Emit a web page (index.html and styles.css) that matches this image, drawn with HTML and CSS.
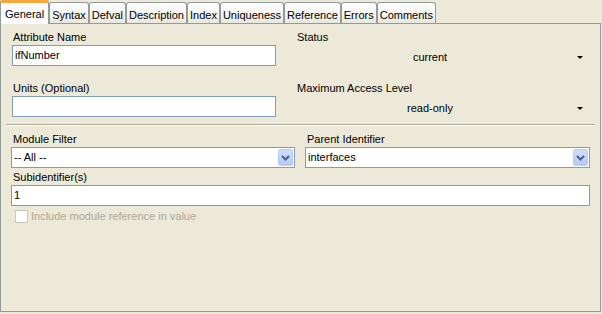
FILE: index.html
```html
<!DOCTYPE html>
<html lang="en">

<head>
  <meta charset="UTF-8" />
  <title>Object Type Properties</title>
  <link rel="stylesheet" href="styles.css">
</head>

<body>
  <div class="tabs">
    <div class="tab active">General</div>
    <div class="tab">Syntax</div>
    <div class="tab">Defval</div>
    <div class="tab">Description</div>
    <div class="tab">Index</div>
    <div class="tab">Uniqueness</div>
    <div class="tab">Reference</div>
    <div class="tab">Errors</div>
    <div class="tab">Comments</div>
  </div>

  <div class="panel">
    <div class="top-grid">
      <div class="field-group">
        <label class="label">Attribute Name</label>
        <div class="textbox">ifNumber</div>
      </div>
      <div class="field-group">
        <label class="label">Status</label>
        <div class="flat-combo">
          <span class="flat-value">current</span>
          <span class="flat-arrow"></span>
        </div>
      </div>
      <div class="field-group">
        <label class="label">Units (Optional)</label>
        <div class="textbox"></div>
      </div>
      <div class="field-group">
        <label class="label">Maximum Access Level</label>
        <div class="flat-combo">
          <span class="flat-value">read-only</span>
          <span class="flat-arrow"></span>
        </div>
      </div>
    </div>

    <div class="separator"></div>

    <div class="bottom-grid">
      <div class="field-group">
        <label class="label">Module Filter</label>
        <div class="combo">
          <span class="combo-value">-- All --</span>
          <span class="combo-btn">
            <svg width="9" height="6" viewBox="0 0 9 6">
              <path d="M1 1 L4.5 4.5 L8 1" fill="none" stroke="#4d6185" stroke-width="2" />
            </svg>
          </span>
        </div>
      </div>
      <div class="field-group">
        <label class="label">Parent Identifier</label>
        <div class="combo">
          <span class="combo-value">interfaces</span>
          <span class="combo-btn">
            <svg width="9" height="6" viewBox="0 0 9 6">
              <path d="M1 1 L4.5 4.5 L8 1" fill="none" stroke="#4d6185" stroke-width="2" />
            </svg>
          </span>
        </div>
      </div>
      <div class="field-group wide">
        <label class="label">Subidentifier(s)</label>
        <div class="textbox">1</div>
      </div>
    </div>

    <div class="check-row">
      <span class="checkbox"></span>
      <span class="check-label">Include module reference in value</span>
    </div>
  </div>
</body>

</html>
```

FILE: styles.css
```css
:root {
  --face: #ece9d8;
  --tab-border: #919b9c;
  --field-border: #7f9db9;
  --disabled: #aca899;
}

* {
  box-sizing: border-box;
}

body {
  margin: 0;
  width: 602px;
  height: 314px;
  background: var(--face);
  font-family: 'Liberation Sans', Arial, sans-serif;
  font-size: 11px;
  line-height: 13px;
  color: #000;
  overflow: hidden;
}

/* tab strip */
.tabs {
  display: flex;
  align-items: flex-end;
  height: 23px;
}

.tab {
  height: 21px;
  padding: 6px 2px 0;
  border: 1px solid var(--tab-border);
  border-bottom: none;
  border-radius: 3px 3px 0 0;
  background: linear-gradient(#fefefe, #f4f3ee 60%, #e8e7df);
  white-space: nowrap;
}

.tab.active {
  position: relative;
  z-index: 1;
  height: 24px;
  margin-bottom: -1px;
  padding: 5px 4px 0;
  border-top: 3px solid #f5a93a;
  background: #fcfcfe;
  border-radius: 2px 2px 0 0;
}

/* page body */
.panel {
  width: 601px;
  height: 289px;
  border: 1px solid var(--tab-border);
  background: var(--face);
}

.top-grid {
  display: grid;
  grid-template-columns: 264px 292px;
  column-gap: 20px;
  row-gap: 16px;
  padding: 7px 0 0 11px;
}

.field-group {
  display: flex;
  flex-direction: column;
}

.label {
  display: block;
  height: 13px;
  margin-bottom: 1px;
  padding-left: 1px;
}

.textbox {
  height: 21px;
  padding: 3px 2px 0;
  border: 1px solid var(--field-border);
  background: #fff;
}

.flat-combo {
  display: flex;
  align-items: center;
  height: 21px;
  padding-top: 3px;
}

.flat-value {
  flex: 1;
  text-align: center;
}

.flat-arrow {
  width: 0;
  height: 0;
  margin: 0 5px 0 13px;
  border-left: 3px solid transparent;
  border-right: 3px solid transparent;
  border-top: 3px solid #000;
}

.separator {
  margin: 7px 5px 0 5px;
  border-top: 1px solid var(--disabled);
  border-bottom: 1px solid #fff;
}

.bottom-grid {
  display: grid;
  grid-template-columns: 284px 285px;
  column-gap: 10px;
  row-gap: 3px;
  padding: 7px 0 0 10px;
}

.bottom-grid .label {
  padding-left: 2px;
}

.field-group.wide {
  grid-column: 1 / 3;
}

.combo {
  display: flex;
  align-items: center;
  height: 21px;
  padding: 1px;
  border: 1px solid var(--field-border);
  background: #fff;
}

.combo-value {
  flex: 1;
  padding-left: 1px;
}

.combo-btn {
  display: flex;
  align-items: center;
  justify-content: center;
  width: 15px;
  height: 17px;
  border: 1px solid #b9cdf7;
  border-radius: 2px;
  background: linear-gradient(#d0ddfd, #b6c9f5);
}

.check-row {
  display: flex;
  align-items: center;
  gap: 3px;
  padding: 4px 0 0 14px;
}

.checkbox {
  width: 13px;
  height: 13px;
  border: 1px solid #cac8bb;
  background: #fff;
}

.check-label {
  color: var(--disabled);
}
```
